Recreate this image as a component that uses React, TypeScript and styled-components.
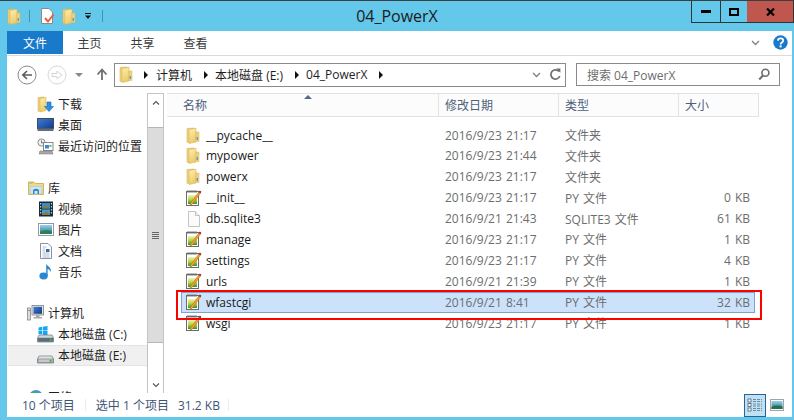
import React from "react";
import styled, { createGlobalStyle } from "styled-components";

const GlobalStyle = createGlobalStyle`
  html, body {
    margin: 0;
    padding: 0;
    overflow: hidden;
  }
  body {
    font-family: "Open Sans", "Noto Sans CJK SC", sans-serif;
    font-size: 12px;
  }
`;

const UI_FONT = `"Open Sans", "Noto Sans CJK SC", sans-serif`;
const ROW_H = "20.9px";

const Shell = styled.div`
  width: 794px;
  height: 420px;
  box-sizing: border-box;
  background: #63c8ea;
  border-top: 1px solid #3c3f41;
  padding-bottom: 3px;
  display: flex;
  flex-direction: column;
  overflow: hidden;
  font-family: ${UI_FONT};
`;

const TitleBar = styled.div`
  height: 30px;
  flex: none;
  display: grid;
  grid-template-columns: 1fr auto 1fr;
  align-items: start;
`;

const QuickAccess = styled.div`
  display: flex;
  align-items: center;
  height: 30px;
  padding-left: 7px;
`;

const QuickSep = styled.div<{ $left: number; $right: number }>`
  width: 1px;
  height: 12px;
  background: #4a90aa;
  margin: 0 ${(p) => p.$right}px 0 ${(p) => p.$left}px;
`;

const QuickGap = styled.span<{ $w: number }>`
  width: ${(p) => p.$w}px;
  flex: none;
`;

const Title = styled.div`
  font-size: 16px;
  line-height: 30px;
  color: #1c1c1c;
`;

const WinControls = styled.div`
  justify-self: end;
  display: flex;
  height: 21px;
  border: 1px solid #2f3436;
  border-top: none;
`;

const WinButton = styled.div<{ $w: number; $red?: boolean }>`
  width: ${(p) => p.$w}px;
  display: flex;
  align-items: center;
  justify-content: center;
  background: ${(p) => (p.$red ? "#c0574f" : "transparent")};
  border-left: ${(p) => (p.$red ? "none" : "1px solid #2f3436")};
  &:first-child {
    border-left: none;
  }
`;

const Content = styled.div`
  flex: 1;
  margin: 0 2px 0 7px;
  background: #fff;
  display: flex;
  flex-direction: column;
  min-height: 0;
`;

const Ribbon = styled.div`
  height: 23px;
  flex: none;
  display: flex;
  align-items: stretch;
  border-bottom: 1px solid #dadbdc;
  padding-bottom: 1px;
`;

const RibbonTab = styled.div<{ $active?: boolean }>`
  width: ${(p) => (p.$active ? 56 : 53)}px;
  display: flex;
  align-items: center;
  justify-content: center;
  font-size: 12px;
  background: ${(p) => (p.$active ? "#1979ca" : "transparent")};
  color: ${(p) => (p.$active ? "#fff" : "#3b3b3b")};
`;

const RibbonRight = styled.div`
  margin-left: auto;
  display: flex;
  align-items: center;
  gap: 13px;
  padding-right: 4px;
`;

const NavBar = styled.div`
  height: 37px;
  flex: none;
  display: flex;
  align-items: center;
`;

const NavButtons = styled.div`
  width: 107px;
  flex: none;
  display: flex;
  align-items: center;
  padding-left: 10px;
  box-sizing: border-box;
`;

const AddressBar = styled.div`
  width: 452px;
  height: 24px;
  box-sizing: border-box;
  border: 1px solid #8a8a8a;
  display: flex;
  align-items: center;
  padding-left: 4px;
  flex: none;
`;

const Crumb = styled.span`
  color: #1e1e1e;
  font-size: 12px;
  white-space: nowrap;
`;

const CrumbArrow = styled.span<{ $l: number; $r: number }>`
  width: 0;
  height: 0;
  border-left: 4px solid #111;
  border-top: 4px solid transparent;
  border-bottom: 4px solid transparent;
  margin: 0 ${(p) => p.$r}px 0 ${(p) => p.$l}px;
`;

const AddressTail = styled.div`
  margin-left: auto;
  display: flex;
  align-items: center;
  gap: 8px;
  padding-right: 4px;
`;

const SearchBox = styled.div`
  width: 204px;
  height: 23px;
  box-sizing: border-box;
  margin-left: 10px;
  border: 1px solid #8a8a8a;
  display: flex;
  align-items: center;
  justify-content: space-between;
  padding: 0 9px 0 10px;
  color: #6d6d6d;
  font-size: 12px;
  flex: none;
`;

const Main = styled.div`
  flex: 1;
  display: flex;
  min-height: 0;
`;

const Sidebar = styled.div`
  width: 140px;
  flex: none;
  overflow: hidden;
  padding-top: 1px;
  box-sizing: border-box;
`;

const NavRow = styled.div<{ $group?: boolean; $selected?: boolean }>`
  height: ${ROW_H};
  display: flex;
  align-items: center;
  box-sizing: border-box;
  margin-left: 1px;
  padding-left: ${(p) => (p.$group ? 19 : 29)}px;
  gap: 4px;
  color: #1e1e1e;
  white-space: nowrap;
  background: ${(p) => (p.$selected ? "#f0f0f0" : "transparent")};
  border-top: ${(p) => (p.$selected ? "1px solid #e4e4e4" : "none")};
  border-bottom: ${(p) => (p.$selected ? "1px solid #e4e4e4" : "none")};
`;

const NavSpacer = styled.div`
  height: ${ROW_H};
`;

const ScrollBar = styled.div`
  width: 17px;
  flex: none;
  box-sizing: border-box;
  border: 1px solid #c4c4c4;
  border-bottom: none;
  display: flex;
  flex-direction: column;
  background: #fff;
`;

const ScrollArrow = styled.div<{ $h: number }>`
  height: ${(p) => p.$h}px;
  flex: none;
  display: flex;
  align-items: center;
  justify-content: center;
`;

const ScrollTrack = styled.div<{ $h: number }>`
  height: ${(p) => p.$h}px;
  flex: none;
`;

const ScrollThumb = styled.div`
  height: 216px;
  flex: none;
  background: #dcdcdc;
  border-top: 1px solid #b5b5b5;
  border-bottom: 1px solid #b5b5b5;
  box-sizing: border-box;
  display: flex;
  flex-direction: column;
  align-items: center;
  justify-content: center;
  gap: 1px;
`;

const Grip = styled.span`
  width: 7px;
  height: 1px;
  background: #666;
`;

const FileArea = styled.div`
  flex: 1;
  min-width: 0;
  padding-left: 3px;
`;

const Header = styled.div`
  width: 592px;
  height: 24px;
  box-sizing: border-box;
  display: grid;
  grid-template-columns: 271px 120px 120px 1fr;
  background: #fcfcfc;
  border-top: 1px solid #e3e3e3;
  border-bottom: 1px solid #e3e3e3;
  border-right: 1px solid #e3e3e3;
  position: relative;
`;

const HeaderCell = styled.div<{ $pad: number; $first?: boolean }>`
  display: flex;
  align-items: center;
  padding-left: ${(p) => p.$pad}px;
  border-left: ${(p) => (p.$first ? "none" : "1px solid #e3e3e3")};
  color: #4c607a;
  font-size: 12px;
`;

const SortArrow = styled.span`
  position: absolute;
  left: 137px;
  top: 1px;
  width: 0;
  height: 0;
  border-left: 4px solid transparent;
  border-right: 4px solid transparent;
  border-bottom: 4px solid #56688a;
`;

const Rows = styled.div`
  margin-left: 14px;
  width: 574px;
  padding-top: 7.6px;
`;

const Row = styled.div<{ $selected?: boolean }>`
  height: ${ROW_H};
  box-sizing: border-box;
  display: grid;
  grid-template-columns: 257px 120px 120px 1fr;
  align-items: center;
  position: relative;
  background: ${(p) => (p.$selected ? "#cce2fb" : "transparent")};
  outline: ${(p) => (p.$selected ? "1px solid #7da2ce" : "none")};
  outline-offset: -1px;
`;

const NameCell = styled.div`
  display: flex;
  align-items: center;
  gap: 4px;
  padding-left: 3px;
  color: #1a1a1a;
`;

const InfoCell = styled.div<{ $right?: boolean }>`
  color: #6d6d6d;
  padding-left: ${(p) => (p.$right ? 0 : 7)}px;
  padding-right: ${(p) => (p.$right ? 5 : 0)}px;
  text-align: ${(p) => (p.$right ? "right" : "left")};
  white-space: nowrap;
  word-spacing: 1px;
`;

const RedMark = styled.div`
  position: absolute;
  left: -5px;
  right: -7px;
  top: -2px;
  bottom: -7px;
  border: 2px solid #ff0000;
  pointer-events: none;
  z-index: 2;
`;

const StatusBar = styled.div`
  height: 24px;
  flex: none;
  display: flex;
  align-items: center;
  padding-left: 15px;
  color: #3e5474;
  font-size: 12px;
`;

const StatusSep = styled.span<{ $ml: number; $mr: number }>`
  width: 1px;
  height: 12px;
  background: #ececec;
  margin: 0 ${(p) => p.$mr}px 0 ${(p) => p.$ml}px;
`;

const StatusText = styled.span<{ $ml?: number }>`
  margin-left: ${(p) => p.$ml ?? 0}px;
  white-space: nowrap;
`;

const ViewButtons = styled.div`
  margin-left: auto;
  display: flex;
  align-items: center;
  padding-right: 8px;
  height: 100%;
`;

const ViewButton = styled.div<{ $active?: boolean }>`
  width: 22px;
  height: 23px;
  box-sizing: border-box;
  display: flex;
  align-items: center;
  justify-content: center;
  background: ${(p) => (p.$active ? "#bfe0f5" : "transparent")};
  border: 1px solid ${(p) => (p.$active ? "#2a6496" : "transparent")};
  margin-right: ${(p) => (p.$active ? 4 : 0)}px;
`;

const IconSlot = styled.span`
  width: 18px;
  flex: none;
  display: flex;
  justify-content: center;
`;

const NavIconSlot = styled.span`
  width: 17px;
  flex: none;
  display: flex;
  justify-content: center;
`;

const SmallDown = styled.span`
  width: 0;
  height: 0;
  border-left: 4px solid transparent;
  border-right: 4px solid transparent;
  border-top: 4px solid #8a8a8a;
`;

// icons
const Svg: React.FC<{ w?: number; h?: number; children: React.ReactNode }> = ({ w = 16, h = 16, children }) => (
  <svg width={w} height={h} viewBox={`0 0 ${w} ${h}`} style={{ flex: "none", display: "block" }}>
    {children}
  </svg>
);

const Defs = () => (
  <svg width="0" height="0" style={{ position: "absolute" }}>
    <defs>
      <linearGradient id="fold" x1="0" y1="0" x2="0.3" y2="1">
        <stop offset="0" stopColor="#fdf0b5" />
        <stop offset="1" stopColor="#eecb69" />
      </linearGradient>
      <linearGradient id="foldback" x1="0" y1="0" x2="1" y2="0">
        <stop offset="0" stopColor="#f3d67e" />
        <stop offset="1" stopColor="#e2b94f" />
      </linearGradient>
      <linearGradient id="pad" x1="0" y1="0" x2="0" y2="1">
        <stop offset="0" stopColor="#f2f4b0" />
        <stop offset="0.5" stopColor="#b4d446" />
        <stop offset="1" stopColor="#2e962c" />
      </linearGradient>
      <linearGradient id="screen" x1="0" y1="0" x2="1" y2="1">
        <stop offset="0" stopColor="#3f7fd8" />
        <stop offset="1" stopColor="#123a86" />
      </linearGradient>
      <linearGradient id="sky" x1="0" y1="0" x2="0" y2="1">
        <stop offset="0" stopColor="#9fd0ea" />
        <stop offset="0.55" stopColor="#4f9fb4" />
        <stop offset="1" stopColor="#2e7a4c" />
      </linearGradient>
      <linearGradient id="drive" x1="0" y1="0" x2="0" y2="1">
        <stop offset="0" stopColor="#f2f2f2" />
        <stop offset="1" stopColor="#a9a9a9" />
      </linearGradient>
    </defs>
  </svg>
);

const FolderIcon = () => (
  <Svg w={14} h={17}>
    <path d="M1 1.5 L8 1 L8 14 L1 15.5 Z" fill="url(#foldback)" stroke="#d9b65a" strokeWidth="0.6" />
    <path d="M3 2.5 L10 1.2 L10 15 L3 16.5 Z" fill="url(#fold)" stroke="#d9b65a" strokeWidth="0.6" />
    <rect x="10" y="5" width="3" height="9.5" fill="#f1d27a" stroke="#d9b65a" strokeWidth="0.5" />
    <rect x="10.6" y="10" width="1.4" height="3" fill="#5b9bd5" />
  </Svg>
);

const PyIcon = () => (
  <Svg w={17} h={18}>
    <rect x="1.5" y="2.5" width="12" height="14" fill="#fff" stroke="#6b6b6b" />
    <path d="M3 1v3M5 1v3M7 1v3M9 1v3M11 1v3" stroke="#6f6f6f" strokeWidth="0.9" strokeDasharray="1.4 0.6" />
    <rect x="3" y="6" width="9" height="9" fill="url(#pad)" />
    <path d="M5.5 14 L13.8 3 L15.4 4.2 L7 15.4 L5 16 Z" fill="#f0a030" stroke="#b56a14" strokeWidth="0.5" />
    <path d="M13.8 3 L14.8 1.6 L16.4 2.8 L15.4 4.2 Z" fill="#8c1f24" />
  </Svg>
);

const BlankDocIcon = () => (
  <Svg w={17} h={18}>
    <path d="M3.5 1.5 H10.5 L14.5 5.5 V16.5 H3.5 Z" fill="#fbfbfb" stroke="#c4c4c4" />
    <path d="M10.5 1.5 V5.5 H14.5" fill="#efefef" stroke="#c4c4c4" />
  </Svg>
);

const DownloadIcon = () => (
  <Svg w={17} h={17}>
    <path d="M1 1.5 L7 1 L7 14 L1 15.5 Z" fill="url(#foldback)" stroke="#d9b65a" strokeWidth="0.6" />
    <path d="M3 2.5 L9 1.2 L9 14.5 L3 16 Z" fill="url(#fold)" stroke="#d9b65a" strokeWidth="0.6" />
    <path d="M10 6 H14 V10.5 H16.5 L12 15.5 L7.5 10.5 H10 Z" fill="#2f8fdf" stroke="#1766b4" strokeWidth="0.6" />
  </Svg>
);

const DesktopIcon = () => (
  <Svg w={17} h={14}>
    <rect x="0.5" y="0.5" width="16" height="10" fill="url(#screen)" stroke="#3b4a5c" />
    <rect x="0.5" y="10.5" width="16" height="2.5" fill="#5f6f80" />
  </Svg>
);

const RecentIcon = () => (
  <Svg w={17} h={17}>
    <circle cx="4.5" cy="4.5" r="3.6" fill="#f1f1f1" stroke="#8d8d8d" />
    <path d="M4.5 2.5 V4.8 H6.3" stroke="#555" fill="none" strokeWidth="0.8" />
    <rect x="6.5" y="4.5" width="9.5" height="8" fill="#fff" stroke="#888" />
    <rect x="8" y="7" width="4" height="3.5" fill="#3c8bd0" />
    <rect x="12.5" y="7" width="2" height="2" fill="#79b36a" />
    <path d="M3 13 H15 L16 16 H2 Z" fill="#a8a8a8" stroke="#777" strokeWidth="0.5" />
  </Svg>
);

const LibraryIcon = () => (
  <Svg w={16} h={14}>
    <path d="M0.5 1 H6 L7.5 2.5 H15.5 V13.5 H0.5 Z" fill="#f1d98a" stroke="#c8a64c" strokeWidth="0.8" />
    <rect x="1.5" y="1.5" width="3" height="1" fill="#7cc36a" />
    <path d="M2 5.5 H14 L13.4 13 H2.6 Z" fill="#cfe6f4" stroke="#a5c5da" strokeWidth="0.6" />
    <path d="M5 13 V9 Q8 6.5 11 9 V13 H9.5 V10 H6.5 V13 Z" fill="#3f86b8" />
  </Svg>
);

const VideoIcon = () => (
  <Svg w={14} h={16}>
    <rect x="0" y="0.5" width="14" height="15" fill="#1d2a33" />
    <rect x="3" y="2" width="8" height="5.5" fill="#2f8fd6" />
    <rect x="3" y="8.5" width="8" height="5.5" fill="#3c9fdc" />
    <path d="M3 7 L7 4 L11 6.5 V7.5 H3Z" fill="#8a7a3a" />
    <path d="M3 13.5 L7 10.5 L11 13 V14 H3Z" fill="#8a7a3a" />
    {[2, 5, 8, 11].map((y) => (
      <React.Fragment key={y}>
        <rect x="1" y={y} width="1.2" height="1.5" fill="#a5d8e0" />
        <rect x="11.9" y={y} width="1.2" height="1.5" fill="#a5d8e0" />
      </React.Fragment>
    ))}
  </Svg>
);

const PictureIcon = () => (
  <Svg w={16} h={13}>
    <rect x="0.5" y="0.5" width="15" height="12" fill="#fff" stroke="#8d9aa5" />
    <rect x="2" y="2" width="12" height="9" fill="url(#sky)" />
    <path d="M2 9 Q7 6 14 8.5 V11 H2 Z" fill="#2f7d55" />
  </Svg>
);

const DocumentIcon = () => (
  <Svg w={14} h={16}>
    <path d="M1.5 0.5 H9 L12.5 4 V15.5 H1.5 Z" fill="#fff" stroke="#8692a8" />
    <path d="M3.5 4h4M3.5 6h2.5M3.5 8h2.5M3.5 10h7M3.5 12h7M3.5 14h7" stroke="#9aa7bd" strokeWidth="0.8" />
    <rect x="7" y="6" width="3.5" height="3" fill="#2f6ea8" />
  </Svg>
);

const MusicIcon = () => (
  <Svg w={14} h={17}>
    <ellipse cx="4.6" cy="13" rx="4.2" ry="3.4" fill="#2c87d2" />
    <path d="M7.2 13 V1 C8.5 3 12.5 4.5 12 9 C11 7 9.5 6 8.6 6 V13 Z" fill="#2c87d2" />
  </Svg>
);

const ComputerIcon = () => (
  <Svg w={17} h={16}>
    <rect x="0.5" y="3" width="3" height="12" fill="#dcdcdc" stroke="#7a7a7a" strokeWidth="0.7" />
    <rect x="1.2" y="5" width="1.6" height="1" fill="#3da04b" />
    <rect x="5" y="0.5" width="11.5" height="9.5" fill="#e4e4e4" stroke="#7e7e7e" strokeWidth="0.8" />
    <rect x="6.5" y="1.8" width="8.5" height="7" fill="url(#screen)" />
    <path d="M9 10 H12.5 V12 H15 V13.5 H6.5 V12 H9 Z" fill="#a8a8a8" />
  </Svg>
);

const DriveIcon: React.FC<{ system?: boolean }> = ({ system }) => (
  <Svg w={17} h={17}>
    {system && (
      <g fill="#12a7ee">
        <path d="M1.5 1.4 L5.2 0.8 V4.4 H1.5 Z" />
        <path d="M5.9 0.7 L10.5 0 V4.4 H5.9 Z" />
        <path d="M1.5 5.1 H5.2 V8.6 L1.5 8.1 Z" />
        <path d="M5.9 5.1 H10.5 V9.4 L5.9 8.7 Z" />
      </g>
    )}
    <path d="M2 9 H15 L16.5 12 V16 H0.5 V12 Z" fill={system ? "#cfd8dd" : "url(#drive)"} stroke="#6f7578" strokeWidth="0.7" />
    <rect x="1" y="12" width="15" height="3.6" fill={system ? "#54707f" : "#c6c9cb"} stroke="#6f7578" strokeWidth="0.5" />
    <rect x="12.6" y="12.7" width="2" height="2.2" fill="#3fb04a" />
  </Svg>
);

const NetworkIcon = () => (
  <Svg w={16} h={16}>
    <circle cx="8" cy="8" r="7" fill="#3d9ad6" />
    <path d="M4 3 Q8 2 9 5 Q7 8 4 7 Z M9 9 Q13 8 13 11 Q11 14 9 13 Z" fill="#4ea84a" />
  </Svg>
);

const DocCheckIcon = () => (
  <Svg w={15} h={16}>
    <path d="M1.5 0.5 H9 L12.5 4 V15.5 H1.5 Z" fill="#fff" stroke="#8a8a8a" />
    <path d="M5 10 L8 13.5 L13.5 6.5" fill="none" stroke="#e8613c" strokeWidth="2" />
  </Svg>
);

const BackIcon = () => (
  <Svg w={20} h={20}>
    <circle cx="10" cy="10" r="9" fill="#fff" stroke="#8a8a8a" />
    <path d="M15 10 H6.5 M10 6 L5.8 10 L10 14" fill="none" stroke="#5c5c5c" strokeWidth="1.6" />
  </Svg>
);

const ForwardIcon = () => (
  <Svg w={20} h={20}>
    <circle cx="10" cy="10" r="9" fill="#fff" stroke="#d8d8d8" />
    <path d="M5 8.5 H10 V6 L15 10 L10 14 V11.5 H5 Z" fill="none" stroke="#d4d4d4" strokeWidth="1" />
  </Svg>
);

const UpIcon = () => (
  <Svg w={12} h={13}>
    <path d="M6 12 V2 M1.5 6.5 L6 1.5 L10.5 6.5" fill="none" stroke="#6e6e6e" strokeWidth="1.8" />
  </Svg>
);

const RefreshIcon = () => (
  <Svg w={12} h={13}>
    <path d="M10 3.5 A4.6 4.6 0 1 0 10.8 8" fill="none" stroke="#6e6e6e" strokeWidth="1.7" />
    <path d="M7.2 0.5 H11.4 V4.7 Z" fill="#6e6e6e" />
  </Svg>
);

const SearchIcon = () => (
  <Svg w={12} h={13}>
    <circle cx="7.4" cy="4.8" r="3.5" fill="none" stroke="#6d6d6d" strokeWidth="1.6" />
    <path d="M5 7.5 L1.2 11.5" stroke="#6d6d6d" strokeWidth="2" />
  </Svg>
);

const HelpIcon = () => (
  <Svg w={15} h={15}>
    <circle cx="7.5" cy="7.5" r="7.2" fill="#1979ca" />
    <path d="M4.9 5.6 C5 2.6 10.2 2.6 10.2 5.6 C10.2 7.6 7.6 7.4 7.6 9.4" fill="none" stroke="#fff" strokeWidth="1.8" />
    <rect x="6.6" y="10.4" width="2" height="2" fill="#fff" />
  </Svg>
);

const ChevronIcon = () => (
  <Svg w={9} h={6}>
    <path d="M1 1 L4.5 4.5 L8 1" fill="none" stroke="#7f7f7f" strokeWidth="1.3" />
  </Svg>
);

const CaretUp = () => (
  <Svg w={8} h={5}>
    <path d="M1 4.5 L4 1.5 L7 4.5" fill="none" stroke="#555" strokeWidth="1.1" />
  </Svg>
);

const CaretDown = () => (
  <Svg w={8} h={5}>
    <path d="M1 0.5 L4 3.5 L7 0.5" fill="none" stroke="#555" strokeWidth="1.1" />
  </Svg>
);

const DetailsIcon = () => (
  <Svg w={16} h={14}>
    {[1, 5.5, 10].map((y) => (
      <React.Fragment key={y}>
        <rect x="1" y={y} width="3" height="3" fill="#fff" stroke="#4a6378" strokeWidth="0.8" />
        <path d={`M6 ${y + 0.5} h9 M6 ${y + 2.5} h9`} stroke="#5b7285" strokeWidth="0.8" strokeDasharray="3 1" />
      </React.Fragment>
    ))}
  </Svg>
);

const ThumbsIcon = () => (
  <Svg w={14} h={12}>
    <rect x="0.5" y="0.5" width="13" height="11" fill="#fff" stroke="#9aa6b0" />
    <rect x="1.5" y="2" width="11" height="8" fill="url(#sky)" />
    <path d="M1.5 8 Q6 5.5 12.5 7.5 V10 H1.5 Z" fill="#2a6e4a" />
  </Svg>
);

type FileEntry = {
  name: string;
  date: string;
  type: string;
  size?: string;
  kind: "folder" | "py" | "blank";
  selected?: boolean;
};

const files: FileEntry[] = [
  { name: "__pycache__", date: "2016/9/23 21:17", type: "文件夹", kind: "folder" },
  { name: "mypower", date: "2016/9/23 21:44", type: "文件夹", kind: "folder" },
  { name: "powerx", date: "2016/9/23 21:17", type: "文件夹", kind: "folder" },
  { name: "__init__", date: "2016/9/23 21:17", type: "PY 文件", size: "0 KB", kind: "py" },
  { name: "db.sqlite3", date: "2016/9/21 21:43", type: "SQLITE3 文件", size: "61 KB", kind: "blank" },
  { name: "manage", date: "2016/9/23 21:17", type: "PY 文件", size: "1 KB", kind: "py" },
  { name: "settings", date: "2016/9/23 21:17", type: "PY 文件", size: "4 KB", kind: "py" },
  { name: "urls", date: "2016/9/21 21:39", type: "PY 文件", size: "1 KB", kind: "py" },
  { name: "wfastcgi", date: "2016/9/21 8:41", type: "PY 文件", size: "32 KB", kind: "py", selected: true },
  { name: "wsgi", date: "2016/9/23 21:17", type: "PY 文件", size: "1 KB", kind: "py" },
];

const fileIcon = (kind: FileEntry["kind"]) => {
  if (kind === "folder") return <FolderIcon />;
  if (kind === "blank") return <BlankDocIcon />;
  return <PyIcon />;
};

const navItems: ({ icon: React.ReactNode; label: string; group?: boolean; selected?: boolean } | null)[] = [
  { icon: <DownloadIcon />, label: "下载" },
  { icon: <DesktopIcon />, label: "桌面" },
  { icon: <RecentIcon />, label: "最近访问的位置" },
  null,
  { icon: <LibraryIcon />, label: "库", group: true },
  { icon: <VideoIcon />, label: "视频" },
  { icon: <PictureIcon />, label: "图片" },
  { icon: <DocumentIcon />, label: "文档" },
  { icon: <MusicIcon />, label: "音乐" },
  null,
  { icon: <ComputerIcon />, label: "计算机", group: true },
  { icon: <DriveIcon system />, label: "本地磁盘 (C:)" },
  { icon: <DriveIcon />, label: "本地磁盘 (E:)", selected: true },
  null,
  { icon: <NetworkIcon />, label: "网络", group: true },
];

export default function App() {
  return (
    <Shell>
      <GlobalStyle />
      <Defs />
      <TitleBar>
        <QuickAccess>
          <FolderIcon />
          <QuickSep $left={8} $right={10} />
          <DocCheckIcon />
          <QuickGap $w={7} />
          <FolderIcon />
          <QuickGap $w={8} />
          <Svg w={8} h={8}>
            <path d="M1 1.5h6" stroke="#111" />
            <path d="M1 3.5 H7 L4 7 Z" fill="#111" />
          </Svg>
          <QuickSep $left={10} $right={0} />
        </QuickAccess>
        <Title>04_PowerX</Title>
        <WinControls>
          <WinButton $w={28}>
            <Svg w={10} h={3}>
              <rect width="10" height="3" fill="#000" />
            </Svg>
          </WinButton>
          <WinButton $w={26}>
            <Svg w={10} h={8}>
              <rect x="1" y="1" width="8" height="6" fill="none" stroke="#000" strokeWidth="2" />
            </Svg>
          </WinButton>
          <WinButton $w={46} $red>
            <Svg w={9} h={8}>
              <path d="M1 0.5 L8 7.5 M8 0.5 L1 7.5" stroke="#000" strokeWidth="2.2" />
            </Svg>
          </WinButton>
        </WinControls>
      </TitleBar>

      <Content>
        <Ribbon>
          <RibbonTab $active>文件</RibbonTab>
          <RibbonTab>主页</RibbonTab>
          <RibbonTab>共享</RibbonTab>
          <RibbonTab>查看</RibbonTab>
          <RibbonRight>
            <ChevronIcon />
            <HelpIcon />
          </RibbonRight>
        </Ribbon>

        <NavBar>
          <NavButtons>
            <BackIcon />
            <QuickGap $w={10} />
            <ForwardIcon />
            <QuickGap $w={8} />
            <SmallDown />
            <QuickGap $w={13} />
            <UpIcon />
          </NavButtons>
          <AddressBar>
            <FolderIcon />
            <CrumbArrow $l={11} $r={8} />
            <Crumb>计算机</Crumb>
            <CrumbArrow $l={12} $r={7} />
            <Crumb>本地磁盘 (E:)</Crumb>
            <CrumbArrow $l={12} $r={7} />
            <Crumb>04_PowerX</Crumb>
            <CrumbArrow $l={12} $r={0} />
            <AddressTail>
              <ChevronIcon />
              <RefreshIcon />
            </AddressTail>
          </AddressBar>
          <SearchBox>
            <span>搜索 04_PowerX</span>
            <SearchIcon />
          </SearchBox>
        </NavBar>

        <Main>
          <Sidebar>
            {navItems.map((item, i) =>
              item ? (
                <NavRow key={i} $group={item.group} $selected={item.selected}>
                  <NavIconSlot>{item.icon}</NavIconSlot>
                  <span>{item.label}</span>
                </NavRow>
              ) : (
                <NavSpacer key={i} />
              ),
            )}
          </Sidebar>
          <ScrollBar>
            <ScrollArrow $h={16}>
              <CaretUp />
            </ScrollArrow>
            <ScrollTrack $h={17} />
            <ScrollThumb>
              <Grip />
              <Grip />
              <Grip />
              <Grip />
            </ScrollThumb>
            <ScrollTrack $h={34} />
            <ScrollArrow $h={16}>
              <CaretDown />
            </ScrollArrow>
          </ScrollBar>
          <FileArea>
            <Header>
              <SortArrow />
              <HeaderCell $first $pad={16}>名称</HeaderCell>
              <HeaderCell $pad={6}>修改日期</HeaderCell>
              <HeaderCell $pad={6}>类型</HeaderCell>
              <HeaderCell $pad={6}>大小</HeaderCell>
            </Header>
            <Rows>
              {files.map((f) => (
                <Row key={f.name} $selected={f.selected}>
                  <NameCell>
                    <IconSlot>{fileIcon(f.kind)}</IconSlot>
                    {f.name}
                  </NameCell>
                  <InfoCell>{f.date}</InfoCell>
                  <InfoCell>{f.type}</InfoCell>
                  <InfoCell $right>{f.size}</InfoCell>
                  {f.selected && <RedMark />}
                </Row>
              ))}
            </Rows>
          </FileArea>
        </Main>

        <StatusBar>
          <StatusText>10 个项目</StatusText>
          <StatusSep $ml={10} $mr={10} />
          <StatusText>选中 1 个项目</StatusText>
          <StatusText $ml={9}>31.2 KB</StatusText>
          <StatusSep $ml={8} $mr={0} />
          <ViewButtons>
            <ViewButton $active>
              <DetailsIcon />
            </ViewButton>
            <ThumbsIcon />
          </ViewButtons>
        </StatusBar>
      </Content>
    </Shell>
  );
}
